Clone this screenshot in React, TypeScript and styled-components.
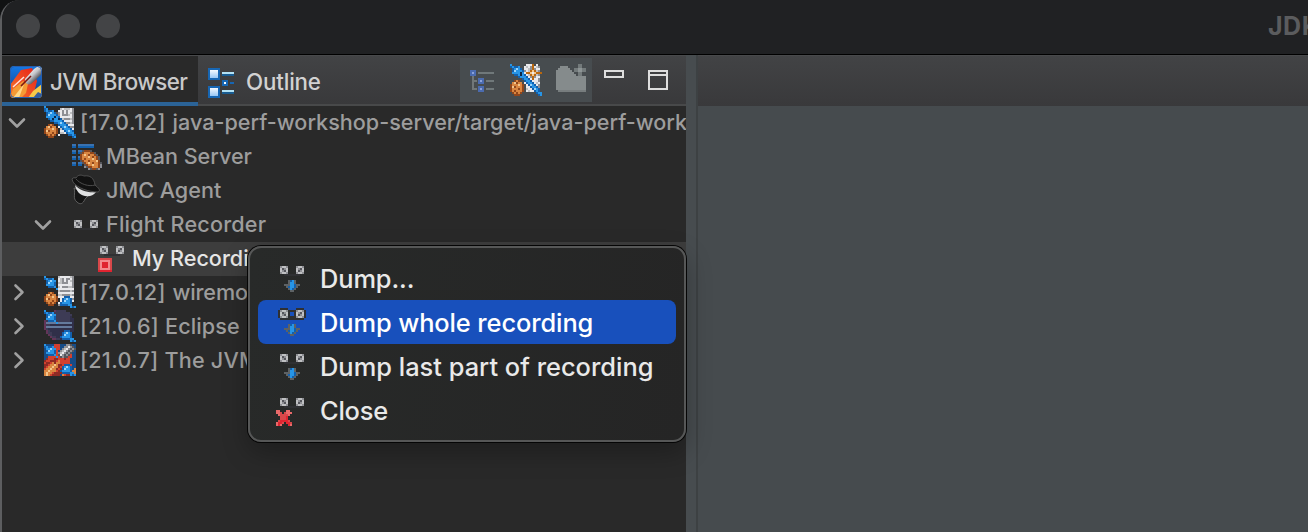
import React from 'react';
import styled, { createGlobalStyle } from 'styled-components';

const GlobalStyle = createGlobalStyle`
  * { box-sizing: border-box; }
  body { margin: 0; background: #111213; overflow: hidden; }
`;

const Window = styled.div`
  position: relative;
  width: 1308px;
  height: 532px;
  overflow: hidden;
  display: flex;
  flex-direction: column;
  border-left: 2px solid #5d5e60;
  border-top-left-radius: 20px;
  background: #202123;
  font-family: Inter, "Liberation Sans", sans-serif;
`;

const TitleBar = styled.header`
  height: 55px;
  flex: none;
  display: flex;
  align-items: center;
  padding: 0 0 3px 14px;
  background: #202123;
  border-bottom: 1px solid #000;
  overflow: hidden;
`;

const Light = styled.span`
  width: 24px;
  height: 24px;
  margin-right: 16px;
  border-radius: 50%;
  background: #434446;
  flex: none;
`;

const Title = styled.span`
  margin-left: 1132px;
  white-space: nowrap;
  font-size: 25px;
  font-weight: 700;
  letter-spacing: 0.5px;
  color: #5b5c5e;
`;

const Panes = styled.div`
  flex: 1;
  display: flex;
  min-height: 0;
`;

const SidePane = styled.section`
  width: 684px;
  display: flex;
  flex-direction: column;
  background: #292929;
  overflow: hidden;
`;

const TabBar = styled.div<{ $plain?: boolean }>`
  height: 51px;
  flex: none;
  display: flex;
  background: linear-gradient(#424345, #39393b);
  border-top: 1px solid #48494b;
  border-bottom: ${p => (p.$plain ? 'none' : '2px solid #48494a')};
`;

const Tab = styled.div<{ $active?: boolean }>`
  width: ${p => (p.$active ? 196 : 262)}px;
  height: ${p => (p.$active ? 50 : 48)}px;
  flex: none;
  display: flex;
  align-items: flex-start;
  padding: 10px 0 0 8px;
  color: ${p => (p.$active ? '#c9c9c9' : '#d2d2d2')};
  background: ${p => (p.$active ? '#292929' : 'transparent')};
  border-bottom: ${p => (p.$active ? '4px solid #2b6397' : 'none')};
`;

const TabText = styled.span<{ $spacing: number; $gap: number }>`
  margin-left: ${p => p.$gap}px;
  line-height: 32px;
  font-size: 22.3px;
  font-weight: 450;
  letter-spacing: ${p => p.$spacing}px;
  white-space: nowrap;
`;

const Toolbar = styled.div`
  width: 132px;
  height: 44px;
  margin-top: 2px;
  flex: none;
  display: flex;
  gap: 14px;
  padding: 6px 0 0 4px;
  background: #474c4f;
`;

const PaneButtons = styled.div`
  display: flex;
  gap: 24px;
  padding: 14px 0 0 12px;
`;

const Minimize = styled.span`
  width: 20px;
  height: 8px;
  border: 2px solid #dedede;
`;

const Maximize = styled.span`
  width: 20px;
  height: 20px;
  border: 2px solid #dedede;
  background: linear-gradient(transparent 2px, #dedede 2px, #dedede 4px, transparent 4px);
`;

const Tree = styled.div`
  display: flex;
  flex-direction: column;
`;

const TreeRow = styled.div<{ $level: number; $selected?: boolean }>`
  height: 34px;
  display: flex;
  align-items: flex-start;
  padding-left: ${p => p.$level * 26}px;
  background: ${p => (p.$selected ? '#3d3d3d' : 'transparent')};
  color: ${p => (p.$selected ? '#e6e6e6' : '#9d9d9d')};
`;

const Twistie = styled.span`
  width: 42px;
  height: 34px;
  flex: none;
  display: flex;
  align-items: center;
  padding-left: 4px;
`;

const RowText = styled.span<{ $spacing: number }>`
  margin-left: 4px;
  line-height: 33px;
  font-size: 21.6px;
  font-weight: 450;
  letter-spacing: ${p => p.$spacing}px;
  white-space: nowrap;
`;

const Version = styled.span<{ $spacing: number }>`
  letter-spacing: ${p => p.$spacing}px;
`;

const Sash = styled.div`
  width: 12px;
  background: linear-gradient(90deg, #474c4f 10px, #3d4143 10px);
`;

const EditorPane = styled.section`
  flex: 1;
  background: #464b4e;
`;

const Menu = styled.div`
  position: absolute;
  left: 246px;
  top: 246px;
  width: 438px;
  height: 196px;
  padding: 8px;
  border: 2px solid #565757;
  border-radius: 13px;
  background: linear-gradient(100deg, #282a29, #252525);
  box-shadow: 0 0 0 1px #050505, 0 10px 26px rgba(0, 0, 0, 0.28);
`;

const MenuItem = styled.div<{ $active?: boolean }>`
  height: 44px;
  display: flex;
  align-items: center;
  padding-left: 18px;
  border-radius: 8px;
  color: ${p => (p.$active ? '#fff' : '#e9e9e9')};
  background: ${p => (p.$active ? '#1850bc' : 'transparent')};
`;

const MenuText = styled.span<{ $spacing: number }>`
  margin-left: 12px;
  padding-top: 2px;
  font-size: 25.4px;
  line-height: 42px;
  font-weight: 450;
  letter-spacing: ${p => p.$spacing}px;
  white-space: nowrap;
`;

const Glyph = styled.svg`
  display: block;
  flex: none;
`;

const palette: Record<string, string> = {
  b: '#2795e6', B: '#1260ad', L: '#9bd4fa', n: '#0c2748',
  W: '#e9e9ec', g: '#8e8f94', k: '#55565c', s: '#2f3033',
  o: '#d98540', O: '#91461b', y: '#f3c58a', Y: '#b9670e',
  r: '#d2402f', R: '#8f2b25', m: '#e02430', M: '#d8484a', p: '#f38a8e',
  P: '#3d3b55', v: '#64799c', V: '#302f49', q: '#633558',
  A: '#3a72b0', i: '#174c87', h: '#bfc0c2', x: '#e86a6a', D: '#3a3b3d', G: '#5d6265',
};

const Pixels = ({ rows, size = 32 }: { rows: string[]; size?: number }) => (
  <Glyph width={size} height={size} viewBox="0 0 16 16" shapeRendering="crispEdges">
    {rows.flatMap((row, y) =>
      row.split('').map((c, x) =>
        palette[c] ? <rect key={`${x}-${y}`} x={x} y={y} width="1" height="1" fill={palette[c]} /> : null,
      ),
    )}
  </Glyph>
);

const serverConnected = [
  'b...............',
  'Bb......hWhhhWg.',
  'BbBBb..WWgWgWWg.',
  '.BbLbBkgWgWgWhg.',
  '.BLbbbBgWggghWg.',
  '.bbbbnbBWWWWWWg.',
  '..BbnbbnBhggghg.',
  '...BBbbbbBWWWWg.',
  '.....BBbLbBgghg.',
  '..OoO..BbbbBWWW.',
  '.oyOoo.WBbLbBgg.',
  'OoooyoO.hBbbbBW.',
  'OyOoooO.WWBbLbB.',
  'OoooOoO.hhWBbbb.',
  '.OoOoO.W....BBbB',
  '..OOO.........Bb',
];

const serverAvailable = [
  'b......hWWWWWhg.',
  'BbBBb..WhgWggWg.',
  '.BbLbb.WhgWgWhg.',
  '.BLbbB.hhgggWWg.',
  '.bbbbB.WWWWWWWg.',
  '..BBBb.hWggghhg.',
  '......bWWWWWWWW.',
  '.......hggggghg.',
  '..OoO..WWWWWWWW.',
  '.oyOoo.hhgggghg.',
  'OoooyoOWWWBBBWW.',
  'OyOoooO.WBbLbBg.',
  'OoooOoO.WBLbbBW.',
  '.OoOoO.WBbbbbB..',
  '..OOO..gBBBBbb..',
  '.............bBb',
];

const eclipse = [
  'b....qPPPPP.....',
  'BbBBbPPPPPPPP...',
  '.BbLbbPPPPPPPP..',
  '.BLbbBPPPPPPPV..',
  '.bbbbBPPPPPPPVV.',
  'qPBBBbPPPPPPPVV.',
  'qvvvvvbvvvvvvvV.',
  'qPPVVVVVVVVVVVV.',
  'qvvvvvvvvvvvvvV.',
  'qPVVVVVVVVVVVVV.',
  '.qPVVVVVVVBBBVV.',
  '.qPPVVVVVBbLbB..',
  '..qPVVVVVBLbbB..',
  '...qPPVVBbbbbB..',
  '....qqPPVBBBBbb.',
  '.............bBb',
];

const missionControl = [
  'biiiirrriiiggkii',
  'BbBBbrrriiggWgki',
  'ibbLbbrrighWgkgk',
  'iBLbbBrighWgkgki',
  'ibbbbBrghWgkgkii',
  'iiBBBbrkWgkgkrii',
  'iirrrrbrkgkkrrii',
  'iRrrrRRrrrRrriii',
  'RrrRRRrorrrrriii',
  'rRRroRoorrrrriii',
  'RRrooyoRRrBBBrii',
  'RrooyooRrBbLbBii',
  'rooyooRrRBLbbBio',
  'ooyooorRBbbbbBoo',
  'oyoorRRRRBBBBbbo',
  'oyorRRRRiorRRbBb',
];

const newConnection = [
  'b.......WWWY.W..',
  'BbBBb..WhWgYWhg.',
  '.BbLbB.WWhgYgWW.',
  '.BLbbbBgWhYyYhg.',
  '.bbbbnbWYYyWyYYY',
  '..BBbnbBWhYyYhg.',
  '....BbbbBWgYgWW.',
  '......BbbBWYWWg.',
  '..OoO..BbbBWWWg.',
  '.oyOoo.WBbbBWhW.',
  'OoooyoO.WBLbBWg.',
  'OyOoooO.WWBbbBg.',
  'OoooOoO.hWWBLbB.',
  'OoOoooO.WhWWBbB.',
  '.OoOoO.......Bbb',
  '..OOO.........Bb',
];

const mbeans = [
  '................',
  '................',
  '.AA.AAAAAAAA....',
  '.BB.BBBBBBBB....',
  '................',
  '.AA.AAkOOOk.....',
  '.BB.BkOoooOOk...',
  '.....OoyoOooOk..',
  '.AA.AOoooyoOoOk.',
  '.BB.BOoOoooyoOk.',
  '.....kOooOoooyO.',
  '.AA.AAkOoyoOooOk',
  '.BB.BB.kOooyooOg',
  '.......gkOOoooOg',
  '.........gkOOkg.',
  '................',
];

const blank = '................';
const reels = ['..ghhg....ghhg..', '..hkgh....hgkh..', '..hgkh....hkgh..', '..ghhg....ghhg..'];
const flight = [blank, blank, blank, blank, blank, blank, ...reels, '....ssssssss....'];
const recording = [
  blank, blank, ...reels, '....ssssssss....', blank,
  '.MMMMMMM........', '.MpppppM........', '.MpmmmpM........', '.MpmmmpM........',
  '.MpmmmpM........', '.MpppppM........', '.mmmmmmm........',
];
const arrow = ['......GBbG......', '......GbbG......', '....GGGbbBGG....', '.....GBbbBG.....', '......GbBG......', '.......GG.......'];
const dump = [blank, blank, ...reels, '....ssssssss....', blank, blank, ...arrow];
const dumpActive = [
  blank, '..ssss....ssss..', '.sghhgssssghhgs.', '.shkghs..shgkhs.',
  '.shgkhs..shkghs.', '.sghhgssssghhgs.', '..ssssssssssss..', blank, blank, ...arrow,
];
const closeIcon = [
  blank, blank, ...reels, '....ssssssss....', blank,
  'xx...xx.........', 'xxM.Mxxx........', '.xMMMMx.........', '..MMMm..........',
  '..MMMm..........', '.MmmmmM.........', 'xmmM.mmM........', 'xmx...mx........',
];

const AgentIcon = () => (
  <Glyph width="32" height="32" viewBox="0 0 32 32">
    <path d="M4 14 C6 20 2 24 7 28 C10 31 13 30 15 25 L19 21 Z" fill="#151515" stroke="#6e6e6e" strokeWidth=".8" />
    <path d="M5 11 C10 17 19 19 26 18 C23 22 19 23 15 22 C10 21 6 17 5 11 Z" fill="#e0e1e2" />
    <path d="M2 5 C3 3 5 4 6 4 C8 0 12 1 14 2 C20 1 24 4 25 11 C29 14 31 17 28 18 C19 18 7 14 3 8 Z" fill="#121212" stroke="#5c5c5c" strokeWidth=".8" />
    <path d="M6 5 C10 10 19 13 25 11" fill="none" stroke="#4c4c4c" strokeWidth="1" />
  </Glyph>
);

const RocketIcon = () => (
  <Glyph width="32" height="32" viewBox="0 0 32 32">
    <defs>
      <linearGradient id="sky" x2="0" y2="1"><stop stopColor="#1479e6" /><stop offset="1" stopColor="#123b82" /></linearGradient>
      <linearGradient id="flame" x1="1" x2="0" y2="1"><stop stopColor="#e72118" /><stop offset=".5" stopColor="#ee4a22" /><stop offset="1" stopColor="#f47a2a" /></linearGradient>
      <linearGradient id="tube" x2=".9" y2="1"><stop offset=".2" stopColor="#fff" /><stop offset=".5" stopColor="#c3c5ca" /><stop offset=".8" stopColor="#3c3c40" /></linearGradient>
      <clipPath id="tile"><rect width="32" height="32" rx="4" /></clipPath>
    </defs>
    <g clipPath="url(#tile)">
      <rect width="32" height="32" fill="url(#sky)" />
      <path d="M0 19 L11 4 L22 2 L27 15 L24 27 L20 32 H0 Z" fill="url(#flame)" />
      <path d="M0 32 L3 23 L13 15 L18 18 L16 27 L11 32 Z" fill="#f59a35" />
      <path d="M3 32 L14 18 L9 32 Z" fill="#ffd887" />
      <path d="M18 32 L23 25 L32 18 V32 Z" fill="#f7c949" />
      <path d="M23 32 L28 26 L32 28 V32 Z" fill="#375d9b" />
      <path d="M15 13 L24 3 Q30 -2 32 2 L32 8 L21 18 Q15 20 15 13Z" fill="url(#tube)" />
      <path d="M3 21 L14 11" stroke="#ffe4dc" strokeWidth="1.5" />
      <path d="M11 20 L21 10" stroke="#7c1612" strokeWidth="1.6" />
      <rect x=".5" y=".5" width="31" height="31" rx="4" fill="none" stroke="#275fae" />
    </g>
  </Glyph>
);

const OutlineIcon = () => (
  <Glyph width="30" height="32" viewBox="0 0 30 32" shapeRendering="crispEdges">
    <defs><linearGradient id="box" x2="0" y2="1"><stop stopColor="#fff" /><stop offset="1" stopColor="#8dc1f4" /></linearGradient></defs>
    <rect x="3" y="3" width="10" height="10" fill="url(#box)" stroke="#1766b3" strokeWidth="2" />
    <rect x="3" y="21" width="10" height="10" fill="url(#box)" stroke="#1766b3" strokeWidth="2" />
    <path d="M16 7h12M16 25h12" stroke="#b3e2f5" strokeWidth="2" />
    <path d="M16 9h12M16 27h12" stroke="#195c91" strokeWidth="2" />
    <path d="M16 14h6v6h-6zM24 16h4v2h-4z" fill="#1766b3" />
    <path d="M18 16h2v2h-2z" fill="#fff" />
  </Glyph>
);

const TreeIcon = () => (
  <Glyph width="32" height="32" viewBox="0 0 32 32" shapeRendering="crispEdges">
    <path d="M9 12v13h4M9 17h4" stroke="#717779" strokeWidth="2" fill="none" />
    <path d="M14 9h16M22 17h8M22 25h8" stroke="#70787a" strokeWidth="2" />
    <g fill="#4b6baf"><path d="M6 6h6v6h-6zM14 14h6v6h-6zM14 22h6v6h-6z" /></g>
    <g fill="#8aa1da"><path d="M8 8h2v2h-2zM16 16h2v2h-2zM16 24h2v2h-2z" /></g>
  </Glyph>
);

const FolderIcon = () => (
  <Glyph width="32" height="32" viewBox="0 0 32 32" shapeRendering="crispEdges">
    <path d="M0 6h2v-2h2v-2h8v2h2v2h2v2h2v2h2v2h10v14H0z" fill="#858b8c" />
    <path d="M2 26h28v2H2z" fill="#777d7e" />
    <path d="M22 0h4v4h4v4h-4v4h-4V8h-4V4h4z" fill="#737a7b" />
    <path d="M22 4h4v4h-4z" fill="#8d9495" />
  </Glyph>
);

const Chevron = ({ open }: { open?: boolean }) => (
  <Glyph width="22" height="22" viewBox="0 0 22 22" fill="none" stroke="#a0a0a0" strokeWidth="2.6" strokeLinecap="round" strokeLinejoin="round">
    <path d={open ? 'M4 7.5 L11 14.5 L18 7.5' : 'M9.5 3.5 L16.5 10.2 L9.5 17'} />
  </Glyph>
);

type Node = {
  text: string;
  version?: string;
  versionSpacing?: number;
  level: number;
  icon: React.ReactNode;
  open?: boolean;
  leaf?: boolean;
  selected?: boolean;
  spacing: number;
};

const nodes: Node[] = [
  { version: '[17.0.12] ', versionSpacing: 0.6, text: 'java-perf-workshop-server/target/java-perf-work', level: 0, icon: <Pixels rows={serverConnected} />, open: true, spacing: 0 },
  { text: 'MBean Server', level: 1, icon: <Pixels rows={mbeans} />, leaf: true, spacing: -0.02 },
  { text: 'JMC Agent', level: 1, icon: <AgentIcon />, leaf: true, spacing: 0 },
  { text: 'Flight Recorder', level: 1, icon: <Pixels rows={flight} />, open: true, spacing: 0.2 },
  { text: 'My Recording', level: 2, icon: <Pixels rows={recording} />, leaf: true, selected: true, spacing: 0 },
  { version: '[17.0.12] ', versionSpacing: 0.6, text: 'wiremock', level: 0, icon: <Pixels rows={serverAvailable} />, spacing: -0.15 },
  { version: '[21.0.6] ', versionSpacing: 0.25, text: 'Eclipse', level: 0, icon: <Pixels rows={eclipse} />, spacing: 0.1 },
  { version: '[21.0.7] ', versionSpacing: 0.3, text: 'The JVM', level: 0, icon: <Pixels rows={missionControl} />, spacing: 0.2 },
];

const commands = [
  { text: 'Dump...', icon: dump, spacing: -0.1 },
  { text: 'Dump whole recording', icon: dumpActive, active: true, spacing: -0.09 },
  { text: 'Dump last part of recording', icon: dump, spacing: 0.02 },
  { text: 'Close', icon: closeIcon, spacing: -0.2 },
];

export default function App() {
  return (
    <>
      <GlobalStyle />
      <Window>
        <TitleBar>
          <Light /><Light /><Light />
          <Title>JDK</Title>
        </TitleBar>
        <Panes>
          <SidePane>
            <TabBar>
              <Tab $active><RocketIcon /><TabText $spacing={-0.52} $gap={8}>JVM Browser</TabText></Tab>
              <Tab><OutlineIcon /><TabText $spacing={-0.15} $gap={10}>Outline</TabText></Tab>
              <Toolbar>
                <TreeIcon />
                <Pixels rows={newConnection} />
                <FolderIcon />
              </Toolbar>
              <PaneButtons><Minimize /><Maximize /></PaneButtons>
            </TabBar>
            <Tree>
              {nodes.map(n => (
                <TreeRow key={n.text} $level={n.level} $selected={n.selected}>
                  <Twistie>{!n.leaf && <Chevron open={n.open} />}</Twistie>
                  {n.icon}
                  <RowText $spacing={n.spacing}>
                    {n.version && <Version $spacing={n.versionSpacing ?? 0}>{n.version}</Version>}
                    {n.text}
                  </RowText>
                </TreeRow>
              ))}
            </Tree>
          </SidePane>
          <Sash />
          <EditorPane><TabBar $plain /></EditorPane>
        </Panes>
        <Menu>
          {commands.map(c => (
            <MenuItem key={c.text} $active={c.active}>
              <Pixels rows={c.icon} />
              <MenuText $spacing={c.spacing}>{c.text}</MenuText>
            </MenuItem>
          ))}
        </Menu>
      </Window>
    </>
  );
}
